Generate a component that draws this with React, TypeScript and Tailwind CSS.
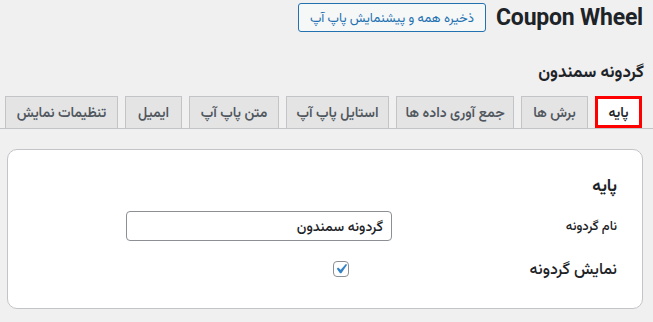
import React from "react";

const tabs = [
  { label: "پایه", w: "w-[47px]", active: true },
  { label: "برش ها", w: "w-[67px]" },
  { label: "جمع آوری داده ها", w: "w-[118px]" },
  { label: "استایل پاپ آپ", w: "w-[103px]" },
  { label: "متن پاپ آپ", w: "w-[90px]" },
  { label: "ایمیل", w: "w-[57px]" },
  { label: "تنظیمات نمایش", w: "w-[113px]" },
];

export default function App() {
  return (
    <div
      dir="rtl"
      className="w-[653px] h-[322px] overflow-hidden bg-[#f0f0f1] text-[#1d2327]"
      style={{ fontFamily: 'Roboto, "Vazirmatn", "Noto Sans Arabic", "DejaVu Sans", sans-serif' }}
    >
      <div className="flex items-center gap-[10px] pr-[10px] pt-[3px] h-[32px]">
        <h1 className="text-[23px] font-bold leading-[29px] tracking-[-0.2px]">Coupon Wheel</h1>
        <button className="w-[188px] h-[29px] rounded-[3px] border border-[#2271b1] bg-[#f6f7f7] text-[#2271b1] text-[13px] leading-[27px] text-center whitespace-nowrap">
          ذخیره همه و پیشنمایش پاپ آپ
        </button>
      </div>
      <div className="pr-[9px] mt-[27px] h-[24px] text-[17px] font-bold leading-[24px]">گردونه سمندون</div>
      <div className="mt-[13px] flex gap-[7px] pr-[11px] pl-[4px] border-b border-[#c3c4c7] h-[33px]">
        {tabs.map((t) =>
          t.active ? (
            <div
              key={t.label}
              className={`${t.w} h-[32px] bg-white border-[3px] border-[#ff0000] text-[14px] font-semibold leading-[26px] text-center text-[#1d2327] whitespace-nowrap`}
            >
              {t.label}
            </div>
          ) : (
            <div
              key={t.label}
              className={`${t.w} h-[32px] bg-[#e4e4e5] border border-[#c3c4c7] border-b-0 text-[14px] font-semibold leading-[30px] text-center text-[#50575e] whitespace-nowrap`}
            >
              {t.label}
            </div>
          )
        )}
      </div>
      <div className="mt-[20px] ml-[7px] mr-[10px] h-[160px] bg-white border border-[#c3c4c7] rounded-[10px] pr-[25px] pt-[23px]">
        <div className="h-[24px] text-[17px] font-bold leading-[24px]">پایه</div>
        <div className="mt-[14px] flex items-center h-[30px]">
          <div className="w-[225px] text-[13px] leading-[20px] font-medium">نام گردونه</div>
          <div className="w-[266px] h-[30px] rounded-[4px] border border-[#8c8f94] bg-white px-[8px] text-[14px] leading-[28px] font-medium">
            گردونه سمندون
          </div>
        </div>
        <div className="mt-[16px] flex items-center h-[24px]">
          <div className="w-[268px] text-[16px] leading-[24px] font-medium">نمایش گردونه</div>
          <div className="relative w-[16px] h-[16px] rounded-[4px] border border-[#8c8f94] bg-white">
            <svg className="absolute -left-[3px] -top-[3px]" width="20" height="20" viewBox="0 0 20 20">
              <path d="M14.83 4.89l1.34.94-5.81 8.38H9.02L5.78 9.67l1.34-1.25 2.57 2.4z" fill="#3582c4" />
            </svg>
          </div>
        </div>
      </div>
    </div>
  );
}
